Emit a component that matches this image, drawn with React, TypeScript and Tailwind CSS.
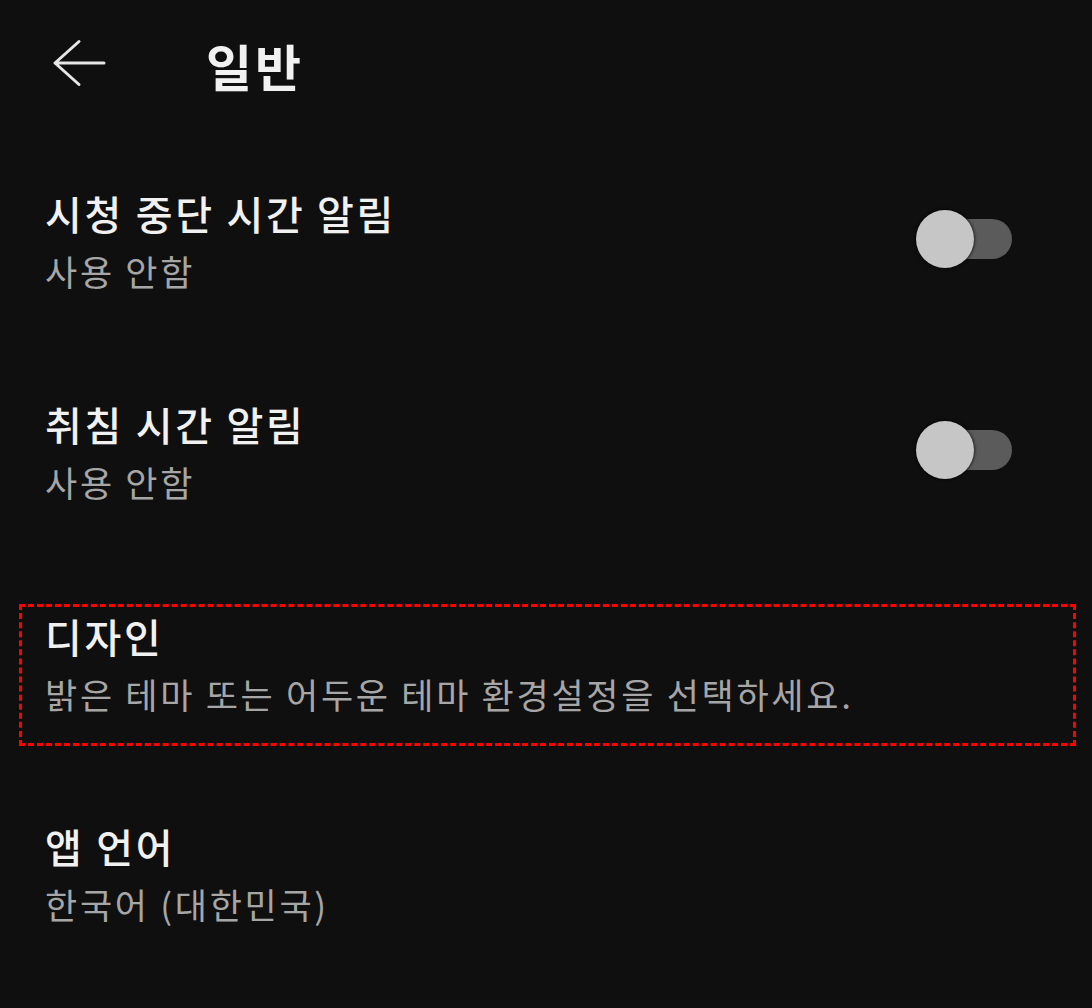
import { useState } from "react"

type Row = {
  title: string
  subtitle: string
  toggle?: boolean
  highlight?: boolean
}

const rows: Row[] = [
  { title: "시청 중단 시간 알림", subtitle: "사용 안함", toggle: true },
  { title: "취침 시간 알림", subtitle: "사용 안함", toggle: true },
  { title: "디자인", subtitle: "밝은 테마 또는 어두운 테마 환경설정을 선택하세요.", highlight: true },
  { title: "앱 언어", subtitle: "한국어 (대한민국)" },
]

const BackArrow = () => (
  <svg width="54" height="48" viewBox="0 0 54 48" fill="none">
    <path
      d="M52 24H3M3 24L27 2.5M3 24L27 45.5"
      stroke="#e6e6e6"
      strokeWidth="3"
      strokeLinecap="round"
      strokeLinejoin="round"
    />
  </svg>
)

const Toggle = ({ on, onClick }: { on: boolean; onClick: () => void }) => (
  <button onClick={onClick} className="relative w-[96px] h-[58px] -mt-[6px] flex items-center">
    <span className="absolute left-[18px] right-0 h-[40px] rounded-full bg-[#5b5b5b]" />
    <span
      className={
        on
          ? "absolute right-0 w-[58px] h-[58px] rounded-full bg-[#c6c6c6] shadow-[0_0_3px_1px_rgba(0,0,0,0.6)]"
          : "absolute left-0 w-[58px] h-[58px] rounded-full bg-[#c6c6c6] shadow-[0_0_3px_1px_rgba(0,0,0,0.6)]"
      }
    />
  </button>
)

const RowText = ({ row }: { row: Row }) => (
  <div className="flex flex-col">
    <div className="text-[40px] leading-[58px] tracking-[2.7px] text-[#f1f1f1] font-medium whitespace-nowrap">
      {row.title}
    </div>
    <div className="text-[35px] leading-[58px] tracking-[2.7px] text-[#a6a6a6] whitespace-nowrap">
      {row.subtitle}
    </div>
  </div>
)

export default function App() {
  const [toggles, setToggles] = useState<Record<number, boolean>>({})

  return (
    <div className="w-[1092px] h-[1008px] overflow-hidden bg-[#0f0f0f] font-['Noto_Sans_CJK_KR','Noto_Sans',sans-serif]">
      <header className="flex items-center h-[126px] pl-[52px]">
        <BackArrow />
        <h1 className="ml-[100px] mt-[4px] text-[50px] leading-none tracking-[3px] font-bold text-[#f1f1f1]">일반</h1>
      </header>

      <div className="mt-[58px] flex flex-col">
        {rows.map((row, i) =>
          row.highlight ? (
            <div key={i} className="h-[211px]">
              <div className="ml-[19px] mr-[16px] h-[142px] border-[3px] border-dashed border-[#ff0000] pl-[23px] -mt-[2px]">
                <RowText row={row} />
              </div>
            </div>
          ) : (
            <div key={i} className="h-[211px] flex items-start">
              <div className="flex flex-1 items-center justify-between pl-[45px] pr-[80px]">
                <RowText row={row} />
                {row.toggle && (
                  <Toggle on={!!toggles[i]} onClick={() => setToggles({ ...toggles, [i]: !toggles[i] })} />
                )}
              </div>
            </div>
          )
        )}
      </div>
    </div>
  )
}
